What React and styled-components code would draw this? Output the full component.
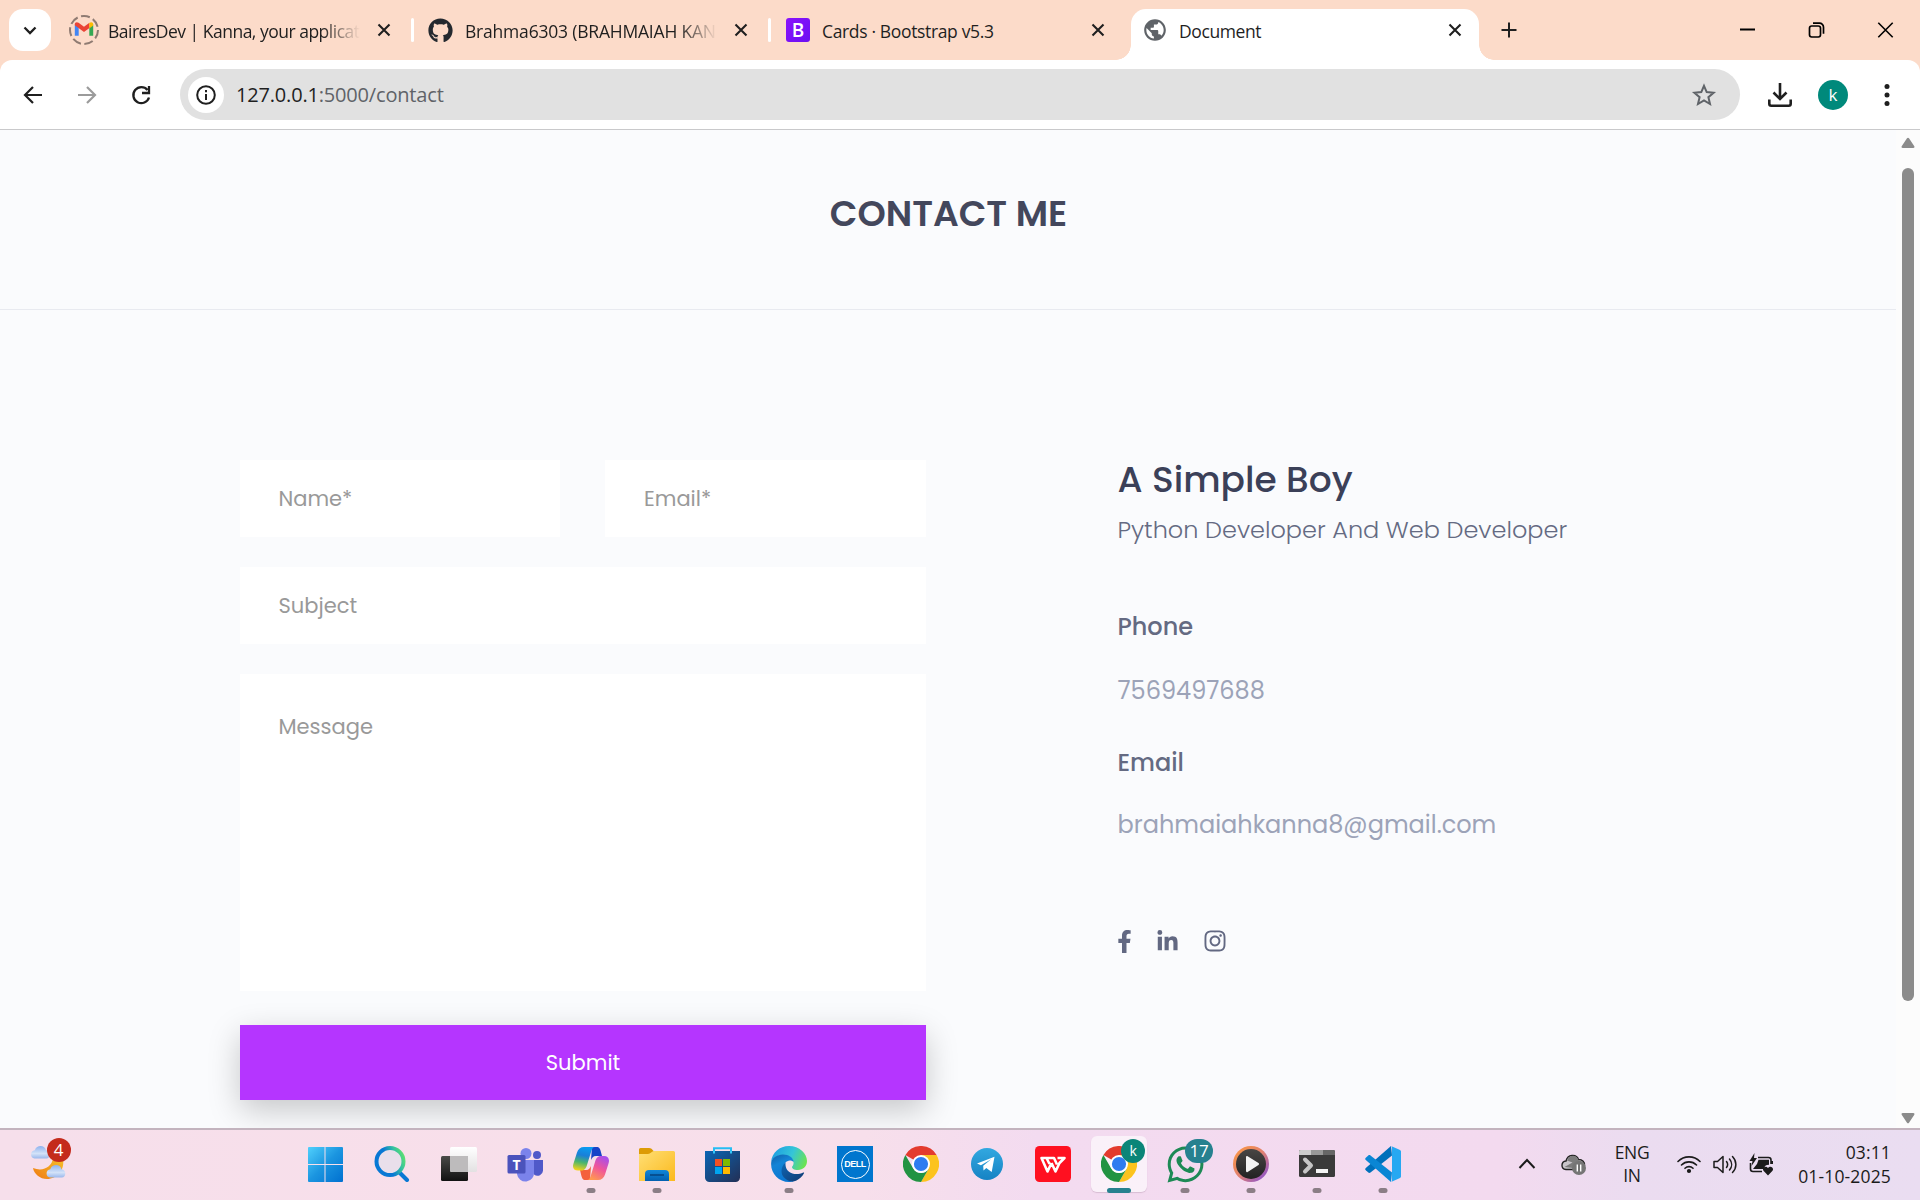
import React from "react";
import styled, { createGlobalStyle, css } from "styled-components";
import { FaGithub, FaFacebookF, FaLinkedinIn, FaInstagram, FaWhatsapp } from "react-icons/fa";
import { MdPublic } from "react-icons/md";

const GlobalStyle = createGlobalStyle`
  * { box-sizing: border-box; }
  body { margin: 0; overflow: hidden; background: #fafbfd; }
  svg { display: block; flex: none; }
`;

const uiFont = `"Segoe UI", "Open Sans", "Noto Sans", sans-serif`;
const pageFont = `Poppins, Inter, sans-serif`;

const Screen = styled.div`
  width: 1920px;
  height: 1200px;
  display: flex;
  flex-direction: column;
  overflow: hidden;
  font-family: ${uiFont};
`;

/* ---------- tab strip ---------- */

const TabStrip = styled.div`
  height: 60px;
  flex: none;
  display: flex;
  align-items: flex-start;
  padding: 9px 0 0 9px;
  background: #fcdbc9;
`;

const TabSearch = styled.button`
  width: 42px;
  height: 42px;
  margin-right: 8px;
  padding: 0;
  border: 0;
  border-radius: 14px;
  background: #fff;
  display: flex;
  align-items: center;
  justify-content: center;
`;

const Tab = styled.div`
  position: relative;
  width: ${(p) => p.$width}px;
  height: 51px;
  padding: 0 ${(p) => p.$end}px 9px ${(p) => p.$inset}px;
  display: flex;
  align-items: center;
  border-radius: 15px 15px 0 0;
  color: #1f1f1f;
  ${(p) =>
    p.$active &&
    css`
      background: #fff;
      &::before,
      &::after {
        content: "";
        position: absolute;
        bottom: 0;
        width: 15px;
        height: 15px;
      }
      &::before {
        left: -15px;
        background: radial-gradient(circle at 0 0, transparent 14.5px, #fff 15px);
      }
      &::after {
        right: -15px;
        background: radial-gradient(circle at 100% 0, transparent 14.5px, #fff 15px);
      }
    `}
`;

const TabTitle = styled.span`
  flex: 1;
  min-width: 0;
  white-space: nowrap;
  margin: 2px 12px 0 ${(p) => p.$gap}px;
  font-size: 17.5px;
  line-height: 26px;
  letter-spacing: ${(p) => p.$spacing}px;
  ${(p) => p.$fade && css`mask-image: linear-gradient(90deg, #000 calc(100% - 38px), transparent);`}
`;

const TabDivider = styled.span`
  width: 3px;
  height: 24px;
  margin-top: 9px;
  border-radius: 2px;
  background: #fff;
`;

const BootstrapIcon = styled.span`
  width: 24px;
  height: 24px;
  border-radius: 3px;
  background: linear-gradient(135deg, #8a12fc, #6b10f2);
  color: #fff;
  font: 600 19px/24px "Open Sans", sans-serif;
  text-align: center;
`;

const NewTab = styled.div`
  width: 60px;
  height: 42px;
  display: flex;
  align-items: center;
  justify-content: center;
`;

const WindowControls = styled.div`
  margin-left: auto;
  height: 42px;
  display: flex;
  align-items: center;
  & > svg { width: 69px; }
`;

/* ---------- address bar ---------- */

const ToolbarWrap = styled.div`
  flex: none;
  background: #fcdbc9;
`;

const Toolbar = styled.div`
  height: 70px;
  display: flex;
  align-items: center;
  padding: 0 14px 0 20px;
  border-bottom: 1px solid #c9c9cb;
  border-radius: 12px 12px 0 0;
  background: #fff;
`;

const NavIcons = styled.div`
  display: flex;
  gap: 28px;
  width: 160px;
`;

const Omnibox = styled.div`
  width: 1560px;
  height: 51px;
  padding: 0 23px 0 8px;
  border-radius: 26px;
  background: #e1e1e1;
  display: flex;
  align-items: center;
`;

const SiteInfo = styled.span`
  width: 36px;
  height: 36px;
  border-radius: 50%;
  background: #fff;
  display: flex;
  align-items: center;
  justify-content: center;
`;

const Url = styled.span`
  flex: 1;
  margin-left: 12px;
  color: #5f6368;
  font-size: 20px;
  line-height: 30px;
  letter-spacing: ${(p) => p.$spacing}px;
  b { font-weight: 400; color: #1f1f1f; }
`;

const DownloadSlot = styled.span`
  margin-left: 28px;
`;

const Avatar = styled.span`
  width: 30px;
  height: 30px;
  margin: 0 36px 0 26px;
  border-radius: 50%;
  background: #00897b;
  color: #fff;
  font-size: 17px;
  line-height: 29px;
  text-align: center;
`;

/* ---------- page ---------- */

const Viewport = styled.div`
  height: 998px;
  flex: none;
  display: flex;
  overflow: hidden;
  background: #fafbfd;
  font-family: ${pageFont};
`;

const Page = styled.main`
  width: 1896px;
`;

const PageHeader = styled.header`
  height: 180px;
  padding-top: 62px;
  border-bottom: 1px solid #e8eaf0;
  text-align: center;
`;

const Heading = styled.h1`
  margin: 0;
  padding-left: 1px;
  color: #43475c;
  font-size: 36px;
  font-weight: 600;
  line-height: 44px;
`;

const Columns = styled.section`
  display: grid;
  grid-template-columns: 686px 500px;
  column-gap: 191.5px;
  padding: 150px 0 0 240px;
`;

const Form = styled.form`
  display: flex;
  flex-direction: column;
  gap: 30px;
`;

const FieldRow = styled.div`
  display: grid;
  grid-template-columns: 320px 321.5px;
  justify-content: space-between;
`;

const fieldStyle = css`
  display: block;
  width: 100%;
  border: 0;
  border-radius: 0;
  outline: 0;
  background: #fff;
  font-family: ${pageFont};
  font-size: 21px;
  line-height: 32px;
  &::placeholder { color: #999; opacity: 1; }
`;

const Field = styled.input`
  ${fieldStyle}
  height: 77px;
  padding: 0 ${(p) => p.$inset || 38.5}px;
`;

const Message = styled.textarea`
  ${fieldStyle}
  height: 317px;
  padding: 37px 38.5px;
  resize: none;
`;

const Submit = styled.button`
  height: 75px;
  margin-top: 4px;
  border: 0;
  background: #b535ff;
  box-shadow: 0 10px 32px rgba(0, 0, 0, 0.21);
  color: #fff;
  font-family: ${pageFont};
  font-size: 21px;
`;

const Name = styled.h2`
  margin: 0 0 12px;
  color: #3b4058;
  font-size: 36px;
  font-weight: 500;
  line-height: 40px;
`;

const Role = styled.p`
  margin: 0 0 61px;
  color: #646a82;
  font-size: 24px;
  font-weight: 300;
  line-height: 36px;
`;

const Label = styled.h3`
  margin: 0 0 ${(p) => p.$after}px;
  color: #646a82;
  font-size: 24px;
  font-weight: 500;
  line-height: 36px;
`;

const Value = styled.p`
  margin: 0 0 36px;
  color: #9ca3b8;
  font-size: 24px;
  line-height: 36px;
`;

const Socials = styled.div`
  display: flex;
  align-items: center;
  margin-top: 86px;
  gap: 25px;
  color: #626882;
  svg:first-child { margin: 0 -4.5px 0 -5px; }
  svg:last-child { margin-left: -1px; }
`;

const ScrollTrack = styled.div`
  width: 24px;
  padding: 7px 5px 4px;
  background: #fcfcfc;
  display: flex;
  flex-direction: column;
  align-items: center;
  justify-content: space-between;
`;

const ScrollThumb = styled.div`
  width: 12px;
  height: 833px;
  margin-bottom: 92px;
  border-radius: 6px;
  background: #8b8b8b;
`;

/* ---------- taskbar ---------- */

const Taskbar = styled.footer`
  height: 72px;
  flex: none;
  display: flex;
  border-top: 2px solid #c3b3be;
  background: linear-gradient(92deg, #f6dfeb 0%, #f8dfea 30%, #f7dfeb 45%, #f3dbf0 54%, #f3daef 78%, #ebdcf0 85%, #eaddf1 100%);
  color: #1b1b1b;
`;

const Weather = styled.div`
  position: relative;
  width: 292px;
  padding: 15px 0 0 30px;
`;

const Apps = styled.div`
  display: flex;
  width: 1217px;
`;

const AppCell = styled.div`
  width: 66px;
  height: 70px;
  padding-top: 6px;
  display: flex;
  justify-content: center;
  &:nth-child(2) { width: 68px; }
`;

const AppTile = styled.div`
  position: relative;
  width: 56px;
  height: 56px;
  padding-top: 10px;
  display: flex;
  justify-content: center;
  border-radius: 6px;
  ${(p) => p.$active && css`
    background: rgba(255, 255, 255, 0.6);
    box-shadow: 0 1px 1px rgba(120, 80, 110, 0.22);
  `}
`;

const Indicator = styled.span`
  position: absolute;
  bottom: -1px;
  left: 50%;
  width: ${(p) => (p.$active ? 24 : 9)}px;
  height: 5px;
  transform: translateX(-50%);
  border-radius: 3px;
  background: ${(p) => (p.$active ? "#26818f" : "#8b7e86")};
`;

const Badge = styled.span`
  position: absolute;
  top: ${(p) => p.$top}px;
  left: ${(p) => p.$left}px;
  width: ${(p) => p.$width || 24}px;
  height: 24px;
  border-radius: 12px;
  background: ${(p) => p.$color};
  color: #fff;
  font-size: ${(p) => p.$size || 17}px;
  line-height: 23px;
  text-align: center;
  letter-spacing: -0.3px;
`;

const DellLogo = styled.div`
  width: 36px;
  height: 36px;
  background: #0076ce;
  display: flex;
  align-items: center;
  justify-content: center;
  span {
    width: 29px;
    height: 29px;
    border: 1.5px solid #fff;
    border-radius: 50%;
    color: #fff;
    font: 700 9px/26px "Liberation Sans", sans-serif;
    letter-spacing: -0.5px;
    text-align: center;
  }
`;

const WhatsappMark = styled(FaWhatsapp)`
  width: 41px;
  height: 41px;
  margin: -2.5px;
  color: #1d8a55;
`;

const Tray = styled.div`
  flex: 1;
  display: flex;
  align-items: center;
  padding: 0 29px 2px 9px;
`;

const DriveSlot = styled.span`
  margin-left: 25px;
`;

const Language = styled.div`
  width: 40px;
  margin: 0 25px 0 26px;
  text-align: center;
  font-size: 17.5px;
  line-height: 23px;
  letter-spacing: -0.3px;
`;

const StatusIcons = styled.div`
  display: flex;
  gap: 12px;
`;

const Clock = styled.div`
  flex: 1;
  text-align: right;
  white-space: nowrap;
  font-size: 17.5px;
  line-height: 24px;
  letter-spacing: 0.15px;
`;

/* ---------- icons ---------- */

const CloseIcon = () => (
  <svg width="24" height="24" viewBox="0 0 24 24" fill="none" stroke="#1f1f1f" strokeWidth="2.1">
    <path d="M6.500 6.500l11 11M17.500 6.500l-11 11" />
  </svg>
);

const GmailLoading = () => (
  <svg width="30" height="30" viewBox="0 0 30 30">
    <circle cx="15" cy="15" r="14" fill="none" stroke="#8f7b72" strokeWidth="2" strokeDasharray="9 3.500" />
    <path d="M5.800 9.500v11.300h3.900V12z" fill="#4285f4" />
    <path d="M24.200 9.500v11.300h-3.900V12z" fill="#34a853" />
    <path d="M5.800 9.200c0-2.200 2.300-2.600 3.800-1.400l5.400 4 5.400-4v5.100L15 17l-9.200-6.800z" fill="#ea4335" />
    <path d="M20.300 8c1.600-1.300 3.900-.9 3.900 1.400v1.200l-3.900 2.800z" fill="#fbbc04" />
  </svg>
);

const Windows = () => (
  <svg width="36" height="36" viewBox="0 0 36 36">
    <defs>
      <linearGradient id="win" x1="0" y1="0" x2="1" y2="1">
        <stop offset="0" stopColor="#50d0fc" /><stop offset=".5" stopColor="#1b95e0" /><stop offset="1" stopColor="#0070d0" />
      </linearGradient>
    </defs>
    <path d="M2 1H17.500v17H1V2a1 1 0 0 1 1-1zM18.500 1h16.500a1 1 0 0 1 1 1v16H18.500zM1 19H17.500v17H2a1 1 0 0 1-1-1zM18.500 19H36v16a1 1 0 0 1-1 1H18.500z" fill="url(#win)" />
  </svg>
);

const SearchIcon = () => (
  <svg width="36" height="36" viewBox="0 0 36 36" fill="none">
    <defs>
      <linearGradient id="srch" x1="0" y1=".6" x2="1" y2=".2">
        <stop offset=".4" stopColor="#0878d4" /><stop offset=".75" stopColor="#35c2a0" /><stop offset="1" stopColor="#5de070" />
      </linearGradient>
    </defs>
    <path d="M25 26l8 8" stroke="#0878d4" strokeWidth="4" strokeLinecap="round" />
    <circle cx="16" cy="15.500" r="13.500" fill="#e9dfeb" stroke="url(#srch)" strokeWidth="4" />
  </svg>
);

const TaskView = () => (
  <svg width="36" height="36" viewBox="0 0 36 36">
    <defs>
      <linearGradient id="tv" x1="0" y1="0" x2="0" y2="1"><stop stopColor="#4a4a48" /><stop offset="1" stopColor="#111" /></linearGradient>
      <linearGradient id="tw" x1="0" y1="0" x2="0" y2="1"><stop stopColor="#fff" /><stop offset="1" stopColor="#e3e1e2" /></linearGradient>
    </defs>
    <rect x="0" y="10" width="27" height="25" rx="1.500" fill="url(#tv)" />
    <rect x="9" y="1" width="27" height="25" rx="1.500" fill="url(#tw)" />
    <path d="M9 10h18v16H10.500L9 24.500z" fill="#bdbbbc" />
  </svg>
);

const Teams = () => (
  <svg width="36" height="36" viewBox="0 0 36 36">
    <circle cx="30" cy="9" r="4" fill="#5059c9" />
    <path d="M26 14h10v10a5.500 5.500 0 0 1-9 4.500z" fill="#5059c9" />
    <circle cx="19" cy="7.500" r="5.500" fill="#7b83eb" />
    <path d="M10 14h17v12a8.500 8.500 0 0 1-17 2z" fill="#7b83eb" />
    <rect x="0.500" y="9" width="18" height="18.500" rx="1.500" fill="#4b53bc" />
    <text x="9.500" y="23.500" fill="#fff" fontFamily="Open Sans, sans-serif" fontWeight="700" fontSize="14" textAnchor="middle">T</text>
  </svg>
);

const Copilot = () => (
  <svg width="36" height="36" viewBox="0 0 36 36">
    <defs>
      <linearGradient id="cpA" x1=".5" y1="0" x2=".3" y2="1">
        <stop stopColor="#0a9bf0" /><stop offset=".35" stopColor="#1a7fd8" /><stop offset=".65" stopColor="#4bb56d" /><stop offset="1" stopColor="#f5d21a" />
      </linearGradient>
      <linearGradient id="cpB" x1=".8" y1="0" x2=".3" y2="1">
        <stop stopColor="#a34ef0" /><stop offset=".5" stopColor="#f0559a" /><stop offset="1" stopColor="#ff9a50" />
      </linearGradient>
    </defs>
    <path d="M19 1h4.500c3 0 3.600 2 4.300 4.500L29 10h-6c-3 0-4 2-5 4z" fill="#1743c8" />
    <path d="M17 34h-4.500c-3 0-3.400-2-4.200-4.500L7 24h6c3 0 4-2 5-4z" fill="#f4603c" />
    <path d="M11 1h11c-2 0-3 1.500-4 5l-4 13c-1 3.500-2.500 5.500-6 5.500H5c-4 0-6-2.500-4.500-7L4 6.500C5 3 7.500 1 11 1z" fill="url(#cpA)" />
    <path d="M25 34H14c2 0 3-1.500 4-5l4-13c1-3.500 2.500-6 6-6h3c4 0 6 3 4.500 7.500l-3.500 11C31 32 28.500 34 25 34z" fill="url(#cpB)" />
  </svg>
);

const Explorer = () => (
  <svg width="36" height="36" viewBox="0 0 36 36">
    <defs>
      <linearGradient id="fo" x1="0" y1="0" x2="1" y2="1"><stop stopColor="#ffdf75" /><stop offset="1" stopColor="#fbb91d" /></linearGradient>
      <linearGradient id="fb" x1="0" y1="0" x2="0" y2="1"><stop stopColor="#1186d8" /><stop offset="1" stopColor="#0360b0" /></linearGradient>
    </defs>
    <path d="M0 3.500A1.500 1.500 0 0 1 1.500 2H10c2 0 3 1 5 3.500L12 9H0z" fill="#dd9b05" />
    <path d="M0 8h9c2.500 0 4-3 6-3h19.500A1.500 1.500 0 0 1 36 6.500V35H0z" fill="url(#fo)" />
    <path d="M6 35v-7a4 4 0 0 1 4-4h16a4 4 0 0 1 4 4v7z" fill="url(#fb)" />
    <path d="M11 29h14" stroke="#06437f" strokeWidth="1.500" />
  </svg>
);

const Store = () => (
  <svg width="36" height="36" viewBox="0 0 36 36">
    <defs><linearGradient id="st" x1="0" y1="0" x2="1" y2="1"><stop stopColor="#0a66b4" /><stop offset="1" stopColor="#232f55" /></linearGradient></defs>
    <path d="M9 8V2.200h17V8" fill="none" stroke="#25bdf3" strokeWidth="2" />
    <path d="M0 5h35v26.500a4.500 4.500 0 0 1-4.500 4.500H4.500a4.500 4.500 0 0 1-4.500-4.500z" fill="url(#st)" />
    <path d="M9 7.500V5M26 7.500V5" stroke="#35c8fa" strokeWidth="2" />
    <path d="M10 13h7v7h-7z" fill="#f25022" /><path d="M18 13h7v7h-7z" fill="#7fba00" />
    <path d="M10 21h7v7h-7z" fill="#00a4ef" /><path d="M18 21h7v7h-7z" fill="#ffb900" />
  </svg>
);

const Edge = () => (
  <svg width="36" height="36" viewBox="0 0 36 36">
    <defs>
      <linearGradient id="e1" x1="0" y1=".3" x2="1" y2=".6"><stop stopColor="#1c9de2" /><stop offset=".55" stopColor="#35c5d8" /><stop offset="1" stopColor="#6be350" /></linearGradient>
      <linearGradient id="e2" x1="0" y1="0" x2=".4" y2="1"><stop stopColor="#0f5fa8" /><stop offset=".4" stopColor="#1484d6" /><stop offset="1" stopColor="#0b77d2" /></linearGradient>
      <linearGradient id="e3" x1="0" y1="0" x2="1" y2="1"><stop stopColor="#0d66b5" /><stop offset="1" stopColor="#123a70" /></linearGradient>
    </defs>
    <path d="M.1 16C1 6.500 8.500 0 18 0c10.500 0 18 7.500 18 15 0 5.500-4 9-9 9-4.500 0-6-1.600-6-3 0-.8 1.600-1.500 1.600-4 0-4-4.600-8-10.600-8C7 9 2 11.500.1 16z" fill="url(#e1)" />
    <path d="M.1 18C0 12 6 8.500 12 8.500c6 0 10.500 3.500 10.600 7.500-5-4-10 .5-10 6.500C12.500 30 19 35 23 35.200c-2 .6-3.600.8-5 .8C8 36 .1 28 .1 18z" fill="url(#e2)" />
    <path d="M14.500 16.500C10 20.500 9 27 13 31.500c4 4.500 9 4.600 12 3.200 3.500-1.500 6.500-4.500 8-7.500.3-.7-.2-1-.8-.7C25 30 15 27.500 14.500 19z" fill="url(#e3)" />
  </svg>
);

const Chrome = () => (
  <svg width="36" height="36" viewBox="0 0 36 36">
    <path d="M18 18L2.400 9A18 18 0 0 1 33.600 9z" fill="#e33b2e" />
    <path d="M18 9h15.600A18 18 0 0 1 18 36l7.800-13.500z" fill="#fcc31e" />
    <path d="M2.400 9l7.800 13.500A9 9 0 0 0 25.800 22.500L18 36A18 18 0 0 1 2.400 9z" fill="#229342" />
    <circle cx="18" cy="18" r="9" fill="#fff" /><circle cx="18" cy="18" r="7.100" fill="#2f7cf0" />
  </svg>
);

const Telegram = () => (
  <svg width="36" height="36" viewBox="0 0 36 36">
    <defs><linearGradient id="tg" x1="0" y1="0" x2="0" y2="1"><stop stopColor="#32a8e0" /><stop offset="1" stopColor="#1683c4" /></linearGradient></defs>
    <circle cx="18" cy="18" r="16" fill="url(#tg)" />
    <path d="M8 17.500l17.500-6.800L22.700 26l-5.400-4-2.800 2.600-.3-4.800 8-6.600-10.300 6z" fill="#fff" />
  </svg>
);

const Wps = () => (
  <svg width="36" height="36" viewBox="0 0 36 36">
    <rect width="36" height="36" rx="4.500" fill="#ff1020" />
    <path d="M15 12H6.500l6 13.500L16.500 17M11.500 12l3 6M14.500 12H19l3 6.500M16.500 17l4 8.500 4-8.500L29.500 12H22.500" fill="none" stroke="#fff" strokeWidth="2.600" strokeLinejoin="round" />
  </svg>
);

const Player = () => (
  <svg width="36" height="36" viewBox="0 0 36 36">
    <defs>
      <linearGradient id="pl" x1="0" y1="0" x2="1" y2="1"><stop stopColor="#ff9a3c" /><stop offset=".5" stopColor="#e08070" /><stop offset="1" stopColor="#7a4be0" /></linearGradient>
      <linearGradient id="pd" x1="0" y1="0" x2="0" y2="1"><stop stopColor="#484644" /><stop offset="1" stopColor="#222" /></linearGradient>
    </defs>
    <circle cx="18" cy="18" r="18" fill="url(#pl)" /><circle cx="18" cy="18" r="15" fill="url(#pd)" />
    <path d="M13 11c0-1 .8-1.300 1.600-.8L25.500 17c.7.500.7 1.400 0 1.900l-10.900 7c-.8.500-1.600.2-1.600-.8z" fill="#f3f3f3" />
  </svg>
);

const Terminal = () => (
  <svg width="36" height="36" viewBox="0 0 36 36">
    <rect y="4" width="36" height="27" rx="1.500" fill="#3a3a3a" />
    <path d="M0 9V5.500A1.500 1.500 0 0 1 1.500 4H12v5z" fill="#ccc" /><path d="M12 4h12v5H12z" fill="#999" /><path d="M24 4h10.500A1.500 1.500 0 0 1 36 5.500V9H24z" fill="#666" />
    <path d="M6 13.500l6 6-6 6" fill="none" stroke="#c6c6c6" strokeWidth="4" strokeLinejoin="round" strokeLinecap="round" />
    <path d="M17 23h12v4H17z" fill="#f4f4f4" />
  </svg>
);

const VsCode = () => (
  <svg width="36" height="36" viewBox="0 0 36 36">
    <path d="M26 0l1 9.500L5.500 26.500c-.8.600-1.500.6-2.200 0L.8 24.300c-.8-.8-.8-1.700 0-2.400z" fill="#0070bb" />
    <path d="M26 36l1-9.500L5.500 9.500c-.8-.6-1.500-.6-2.200 0L.8 11.700c-.8.800-.8 1.700 0 2.400z" fill="#0a86d4" />
    <path d="M26 0l8.500 3.700c1 .5 1.500 1 1.500 2v24.600c0 1-.5 1.500-1.500 2L26 36c1-.5 1-1 1-1.700V1.700C27 1 27 .5 26 0z" fill="#27a8f2" />
  </svg>
);

const Cloud = () => (
  <path d="M4.500 13.500a4.200 4.200 0 0 1 .3-8.300C6.500 0 14.500-.5 16 5.200c5 .2 5 8.300.3 8.300z" />
);

const WeatherIcon = () => (
  <svg width="37" height="36" viewBox="0 0 37 36">
    <defs>
      <linearGradient id="mo" x1="1" y1="0" x2="0" y2="1"><stop stopColor="#f5c02a" /><stop offset="1" stopColor="#ef7a13" /></linearGradient>
      <linearGradient id="cl" x1="0" y1="0" x2="0" y2="1"><stop stopColor="#8fb3ee" /><stop offset=".6" stopColor="#d3e2f8" /><stop offset="1" stopColor="#9bb8ec" /></linearGradient>
    </defs>
    <path d="M33 14c2 11-6 20-16 20C10 34 4 29 3 23c10 4 19-1 20-10z" fill="url(#mo)" />
    <g fill="url(#cl)"><Cloud /></g>
    <g fill="url(#cl)" transform="translate(15.500 19)"><Cloud /></g>
  </svg>
);

const OneDrive = () => (
  <svg width="25" height="24" viewBox="0 0 25 24">
    <path d="M5 17.500C-.5 17-.2 9.500 5 9 6.500 2 15.500 1.500 17.500 7.500c4 0 6.500 2.500 6 6l-4 4z" fill="#c9c5ca" stroke="#222" strokeWidth="1.400" />
    <path d="M6 8.500C8 2.500 15.500 2 17.500 8l5 2.500-6 1.500-5 4-8-1 8-4.500z" fill="#7c7c7c" />
    <circle cx="18" cy="16" r="7" fill="#757575" />
    <path d="M16.300 12.500v7M19.700 12.500v7" stroke="#fff" strokeWidth="1.400" />
  </svg>
);

const Wifi = () => (
  <svg width="24" height="24" viewBox="0 0 24 24" fill="none" stroke="#1b1b1b" strokeWidth="1.600" strokeLinecap="round">
    <path d="M1 9.500a15.500 15.500 0 0 1 22 0M4.500 13a10.500 10.500 0 0 1 15 0M8 16.300a5.700 5.700 0 0 1 8 0" />
    <circle cx="12" cy="19" r="1.300" fill="#1b1b1b" />
  </svg>
);

const Volume = () => (
  <svg width="24" height="24" viewBox="0 0 24 24" fill="none" stroke="#1b1b1b" strokeWidth="1.500" strokeLinecap="round" strokeLinejoin="round">
    <path d="M1 9.500h3.500L10 4.500v16l-5.500-5H1zM13.500 9.500c1.200 1.600 1.200 4.400 0 6M16.500 7c2.800 3.300 2.800 7.700 0 11M19.500 4.500c4.500 4.500 4.500 11.500 0 16" />
  </svg>
);

const Battery = () => (
  <svg width="25" height="24" viewBox="0 0 25 24">
    <path d="M9 5.500h10.500a2.500 2.500 0 0 1 2.500 2.500v4M1.500 11v6A2.500 2.500 0 0 0 4 19.500h9" fill="none" stroke="#1b1b1b" strokeWidth="1.600" />
    <path d="M22 9h2v3h-2zM9.500 7.700H20v5c-3 0-5 1.500-5 4.300H4l4-5z" fill="#1b1b1b" />
    <path d="M5.500 1L.5 9h3l-1 5 5.500-8H5z" fill="#1b1b1b" />
    <path d="M19 23.500l-4.500-4.800c-2-3 2.300-5.700 4.500-2.600 2.200-3.100 6.500-.4 4.500 2.600z" fill="#1b1b1b" />
  </svg>
);

const apps = [
  { icon: <Windows /> },
  { icon: <SearchIcon /> },
  { icon: <TaskView /> },
  { icon: <Teams /> },
  { icon: <Copilot />, open: true },
  { icon: <Explorer />, open: true },
  { icon: <Store /> },
  { icon: <Edge />, open: true },
  { icon: <DellLogo><span>DELL</span></DellLogo> },
  { icon: <Chrome /> },
  { icon: <Telegram /> },
  { icon: <Wps /> },
  { icon: <Chrome />, open: true, active: true, badge: { text: "k", $color: "#0b8578", $top: 3, $left: 30, $size: 14 } },
  { icon: <WhatsappMark />, open: true, badge: { text: "17", $color: "#26818f", $top: 3, $left: 28, $width: 28 } },
  { icon: <Player />, open: true },
  { icon: <Terminal />, open: true },
  { icon: <VsCode />, open: true },
];

export default function App() {
  return (
    <Screen>
      <GlobalStyle />
      <TabStrip>
        <TabSearch>
          <svg width="16" height="16" viewBox="0 0 16 16" fill="none" stroke="#1f1f1f" strokeWidth="2.300"><path d="M2.500 5.500L8 11l5.500-5.500" /></svg>
        </TabSearch>
        <Tab $width={352} $inset={10} $end={15}>
          <GmailLoading />
          <TabTitle $gap={9} $spacing={-0.5} $fade>BairesDev | Kanna, your applicat</TabTitle>
          <CloseIcon />
        </Tab>
        <TabDivider />
        <Tab $width={354} $inset={14} $end={15}>
          <FaGithub size={25} color="#24292f" />
          <TabTitle $gap={12} $spacing={-0.2} $fade>Brahma6303 (BRAHMAIAH KAN</TabTitle>
          <CloseIcon />
        </Tab>
        <TabDivider />
        <Tab $width={360} $inset={15} $end={21}>
          <BootstrapIcon>B</BootstrapIcon>
          <TabTitle $gap={12} $spacing={-0.35}>Cards · Bootstrap v5.3</TabTitle>
          <CloseIcon />
        </Tab>
        <Tab $width={348} $inset={11} $end={12} $active>
          <MdPublic size={26} color="#5f6368" />
          <TabTitle $gap={11} $spacing={-0.4}>Document</TabTitle>
          <CloseIcon />
        </Tab>
        <NewTab>
          <svg width="16" height="16" viewBox="0 0 16 16" stroke="#1f1f1f" strokeWidth="2"><path d="M8 .5v15M.5 8h15" /></svg>
        </NewTab>
        <WindowControls>
          <svg height="16" viewBox="0 0 16 16" stroke="#000" strokeWidth="2"><path d="M.5 7.500h15" /></svg>
          <svg height="16" viewBox="0 0 16 16" fill="none" stroke="#000" strokeWidth="1.700"><rect x="1" y="4" width="11" height="11" rx="2.200" /><path d="M4.500 1.200H11a4 4 0 0 1 4 4v6.500" /></svg>
          <svg height="16" viewBox="0 0 16 16" stroke="#000" strokeWidth="1.600"><path d="M.8.800l14.400 14.400M15.200.800L.8 15.200" /></svg>
        </WindowControls>
      </TabStrip>

      <ToolbarWrap>
        <Toolbar>
          <NavIcons>
            <svg width="26" height="26" viewBox="0 0 26 26" fill="none" stroke="#1f1f1f" strokeWidth="2.200"><path d="M22 13H5.500M13 5l-8 8 8 8" /></svg>
            <svg width="26" height="26" viewBox="0 0 26 26" fill="none" stroke="#9b9b9b" strokeWidth="2.200"><path d="M4 13h16.500M13 5l8 8-8 8" /></svg>
            <svg width="26" height="26" viewBox="0 0 26 26" fill="none" stroke="#1f1f1f" strokeWidth="2.300"><path d="M21 15.500A8 8 0 1 1 19.500 8M21 4v7h-7" /></svg>
          </NavIcons>
          <Omnibox>
            <SiteInfo>
              <svg width="20" height="20" viewBox="0 0 20 20" fill="none" stroke="#1f1f1f" strokeWidth="2"><circle cx="10" cy="10" r="8.800" /><path d="M10 9v6M10 5v2.200" /></svg>
            </SiteInfo>
            <Url $spacing={-0.18}><b>127.0.0.1</b>:5000/contact</Url>
            <svg width="26" height="26" viewBox="0 0 26 26" fill="none" stroke="#5f6368" strokeWidth="2"><path d="M13 3.800l2.700 6.300 6.900.6-5.200 4.500 1.600 6.800-6-3.600L7 22l1.600-6.800-5.200-4.500 6.900-.6z" /></svg>
          </Omnibox>
          <DownloadSlot>
            <svg width="24" height="24" viewBox="0 0 24 24" fill="none" stroke="#1f1f1f" strokeWidth="2.600"><path d="M12 0v15.500M5.500 9.500l6.500 6.500 6.500-6.500M1.300 16.500v4.200c0 1.200.8 2 2 2h17.400c1.200 0 2-.8 2-2v-4.200" /></svg>
          </DownloadSlot>
          <Avatar>k</Avatar>
          <svg width="6" height="24" viewBox="0 0 6 24" fill="#1f1f1f"><circle cx="3" cy="3.500" r="2.500" /><circle cx="3" cy="12" r="2.500" /><circle cx="3" cy="20.500" r="2.500" /></svg>
        </Toolbar>
      </ToolbarWrap>

      <Viewport>
        <Page>
          <PageHeader>
            <Heading>CONTACT ME</Heading>
          </PageHeader>
          <Columns>
            <Form>
              <FieldRow>
                <Field placeholder="Name*" />
                <Field placeholder="Email*" $inset={39.5} />
              </FieldRow>
              <Field placeholder="Subject" />
              <Message placeholder="Message" />
              <Submit type="button">Submit</Submit>
            </Form>
            <div>
              <Name>A Simple Boy</Name>
              <Role>Python Developer And Web Developer</Role>
              <Label $after={28}>Phone</Label>
              <Value>7569497688</Value>
              <Label $after={26}>Email</Label>
              <Value>brahmaiahkanna8@gmail.com</Value>
              <Socials>
                <FaFacebookF size={23} />
                <FaLinkedinIn size={23} />
                <FaInstagram size={24} />
              </Socials>
            </div>
          </Columns>
        </Page>
        <ScrollTrack>
          <svg width="14" height="12" viewBox="0 0 14 12" fill="#8b8b8b"><path d="M6 1.300c.5-.8 1.500-.8 2 0l5.300 8c.5.800 0 1.700-1 1.700H1.700c-1 0-1.500-.9-1-1.700z" /></svg>
          <ScrollThumb />
          <svg width="14" height="12" viewBox="0 0 14 12" fill="#8b8b8b"><path d="M6 10.700c.5.800 1.500.8 2 0l5.300-8c.5-.8 0-1.700-1-1.700H1.700c-1 0-1.500.9-1 1.700z" /></svg>
        </ScrollTrack>
      </Viewport>

      <Taskbar>
        <Weather>
          <WeatherIcon />
          <Badge $color="#c42b1c" $top={8} $left={46.5}>4</Badge>
        </Weather>
        <Apps>
          {apps.map((app, i) => (
            <AppCell key={i}>
              <AppTile $active={app.active}>
                {app.icon}
                {app.badge && <Badge {...app.badge}>{app.badge.text}</Badge>}
                {app.open && <Indicator $active={app.active} />}
              </AppTile>
            </AppCell>
          ))}
        </Apps>
        <Tray>
          <svg width="18" height="18" viewBox="0 0 18 18" fill="none" stroke="#1b1b1b" strokeWidth="2"><path d="M1.500 13L9 5l7.500 8" /></svg>
          <DriveSlot><OneDrive /></DriveSlot>
          <Language>ENG<br />IN</Language>
          <StatusIcons><Wifi /><Volume /><Battery /></StatusIcons>
          <Clock>03:11<br />01-10-2025</Clock>
        </Tray>
      </Taskbar>
    </Screen>
  );
}
